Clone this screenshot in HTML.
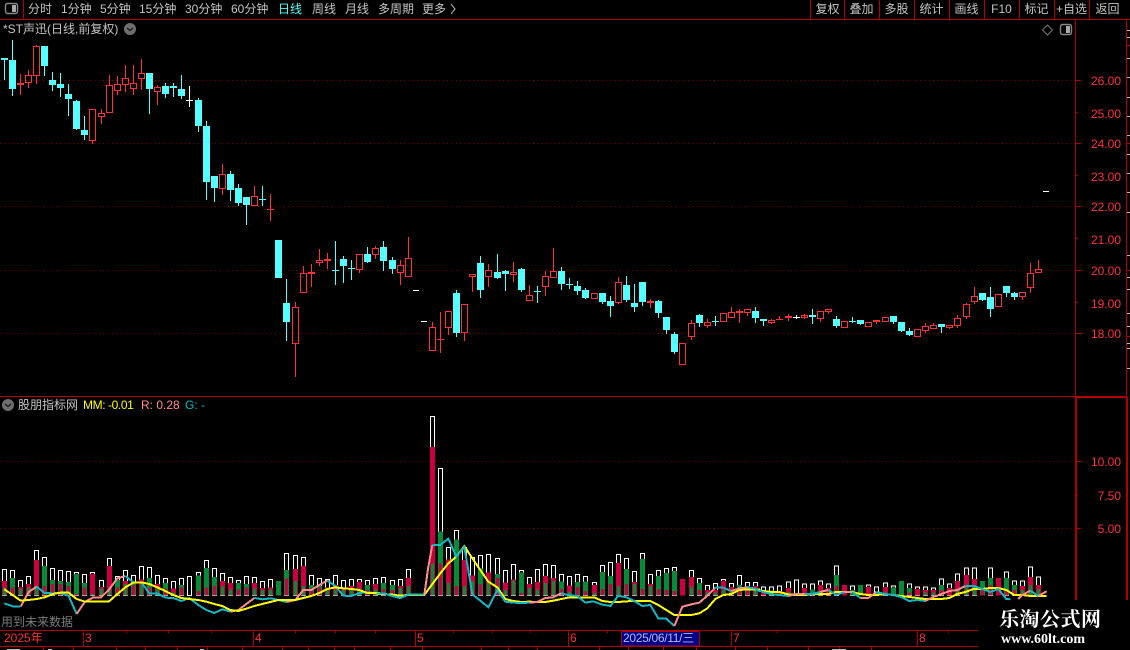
<!DOCTYPE html>
<html><head><meta charset="utf-8"><title>K线</title>
<style>
html,body{margin:0;padding:0;background:#000;width:1130px;height:650px;overflow:hidden}
#r{position:relative;width:1130px;height:650px;background:#000;overflow:hidden;font:12px/14px "Liberation Sans","Noto Sans CJK SC",sans-serif;color:#c4c4c4}
#r svg{position:absolute;left:0;top:0}
.t{position:absolute;white-space:nowrap}
.m{top:2px;height:14px}
.n{top:2px;width:35px;text-align:center}
.p{color:#ff3232;left:1091px}
.q{color:#ff3232;text-align:right;width:30px;left:1091px}
</style></head><body><div id="r">
<svg width="1130" height="650" viewBox="0 0 1130 650">
<g shape-rendering="crispEdges" fill="none">
<!-- grid -->
<path stroke="#8c0000" stroke-dasharray="1 3.3" d="M0 80.5H1075M0 143.5H1075M0 206.5H1075M0 270.5H1075M0 333.5H1075M0 461.5H1075M0 528.5H1075"/>
<!-- frame -->
<path stroke="#b40000" d="M0 19.5H1130M23.5 0V19M810.5 0V19M844.5 0V19M879.5 0V19M914.5 0V19M949.5 0V19M984.5 0V19M1019.5 0V19M1054.5 0V19M1089.5 0V19M1075.5 20V397M1126.5 20V397M0 396.5H1075M1075 80.5H1081M1075 112.5H1078M1075 143.5H1081M1075 175.5H1078M1075 206.5H1081M1075 238.5H1078M1075 270.5H1081M1075 302.5H1078M1075 333.5H1081M1076 461.5H1081M1076 495.5H1078M1076 528.5H1081M1127 45.5H1130M1127 143.5H1130M1127 270.5H1130M1127 336.5H1130"/>
<path stroke="#b40000" stroke-width="2" d="M1075 397H1127M1076 397V600M1127 397V600"/>
<path stroke="#b40000" d="M0 630.5H978M0 646.5H978M83.5 631V646M253.5 631V646M415.5 631V646M568.5 631V646M731.5 631V646M917.5 631V646M126.5 631V633M168.5 631V633M211.5 631V633M295.5 631V633M335.5 631V633M375.5 631V633M453.5 631V633M492.5 631V633M530.5 631V633M607.5 631V633M777.5 631V633M948.5 631V633M43.5 647V650M73.5 647V650M116.5 647V650M145.5 647V650M177.5 647V650M207.5 647V650M242.5 647V650M282.5 647V650M308.5 647V650M334.5 647V650M354.5 647V650M390.5 647V650M422.5 647V650M481.5 647V650M508.5 647V650M537.5 647V650M599.5 647V650M628.5 647V650M663.5 647V650M696.5 647V650M735.5 647V650M767.5 647V650M808.5 647V650M839.5 647V650M871.5 647V650"/>
<path stroke="#bbb" d="M1127 30.5H1130M1127 37.5H1130M1127 58.5H1130M1127 77.5H1130M1127 97.5H1130M1127 116.5H1130M1127 135.5H1130M1127 154.5H1130M1127 173.5H1130M1127 192.5H1130M1127 212.5H1130M1127 255.5H1130M1127 277.5H1130M1127 289.5H1130M1127 313.5H1130M1127 326.5H1130M1127 343.5H1130M1127 348.5H1130M1127 368.5H1130M7 649.5H20M48 649.5H52M200 649.5H204M832 649.5H846"/>
<!-- cyan candles -->
<path stroke="#55ffff" fill="#55ffff" d="M4.5 58V80M1.5 58.5h6v1h-6zM12.5 40V96M9.5 60.5h6V88.5h-6zM44.5 46V76M41.5 46.5h6V65.5h-6zM52.5 72V91M49.5 80.5h6V84.5h-6zM60.5 73V97M57.5 84.5h6V87.5h-6zM68.5 84V116M65.5 94.5h6V98.5h-6zM76.5 100V130M73.5 101.5h6V128.5h-6zM84.5 116V140M81.5 130.5h6V134.5h-6zM149.5 73V114M146.5 73.5h6V88.5h-6zM165.5 83V98M162.5 86.5h6V93.5h-6zM173.5 83V97M170.5 86.5h6V87.5h-6zM181.5 75V99M178.5 89.5h6V95.5h-6zM198.5 98V132M195.5 100.5h6V125.5h-6zM206.5 121V200M203.5 126.5h6V181.5h-6zM214.5 176V202M211.5 176.5h6V187.5h-6zM230.5 171V201M227.5 174.5h6V189.5h-6zM238.5 184V206M235.5 188.5h6V202.5h-6zM246.5 197V225M243.5 197.5h6V204.5h-6zM262.5 186V206M259 199.5h7M275.5 240.5h6V277.5h-6zM286.5 279V341M283.5 303.5h6V321.5h-6zM335.5 241V285M332 270.5h7M343.5 256V283M340.5 259.5h6V265.5h-6zM351.5 260V280M348 268.5h7M367.5 247V263M364.5 254.5h6V261.5h-6zM383.5 241V271M380.5 247.5h6V260.5h-6zM392.5 257V274M389.5 260.5h6V268.5h-6zM456.5 290V337M453.5 293.5h6V332.5h-6zM480.5 256V298M477.5 263.5h6V289.5h-6zM497.5 254V279M494.5 272.5h6V277.5h-6zM505.5 270V291M502.5 271.5h6V273.5h-6zM521.5 268V292M518.5 269.5h6V289.5h-6zM537.5 286V303M534 291.5h7M561.5 267V290M558.5 271.5h6V283.5h-6zM569.5 278V289M566 284.5h7M577.5 281V295M574.5 286.5h6V290.5h-6zM585.5 288V299M582.5 290.5h6V297.5h-6zM602.5 293V304M599.5 293.5h6V301.5h-6zM610.5 296V317M607.5 301.5h6V305.5h-6zM626.5 276V302M623.5 285.5h6V299.5h-6zM634.5 284V312M631.5 303.5h6V306.5h-6zM642.5 282V306M639.5 282.5h6V301.5h-6zM658.5 300V318M655.5 301.5h6V312.5h-6zM666.5 317V334M663.5 317.5h6V329.5h-6zM674.5 332V354M671.5 334.5h6V351.5h-6zM699.5 314V327M696.5 315.5h6V322.5h-6zM715.5 316V326M712 321.5h7M755.5 307V323M752.5 311.5h6V317.5h-6zM763.5 319V326M760.5 319.5h6V320.5h-6zM812.5 309V324M809.5 315.5h6V316.5h-6zM836.5 316V328M833.5 319.5h6V325.5h-6zM852.5 317V323M849 321.5h7M860.5 320V325M857.5 320.5h6V323.5h-6zM893.5 316V324M890.5 316.5h6V321.5h-6zM901.5 322V332M898.5 322.5h6V330.5h-6zM909.5 328V336M906.5 331.5h6V334.5h-6zM941.5 324V333M938.5 324.5h6V326.5h-6zM982.5 293V301M979.5 293.5h6V299.5h-6zM990.5 287V317M987.5 297.5h6V308.5h-6zM1006.5 286V297M1003.5 286.5h6V292.5h-6zM1014.5 292V300M1011.5 293.5h6V296.5h-6z"/>
<!-- red candles -->
<path stroke="#ff3232" d="M20.5 74V95M17.5 83.5h6V84.5h-6zM28.5 70V75M28.5 83V88M25.5 75.5h6V82.5h-6zM36.5 45V46M36.5 75V84M33.5 46.5h6V75.5h-6zM92.5 141V144M89.5 109.5h6V140.5h-6zM101.5 109V113M101.5 117V124M98.5 113.5h6V116.5h-6zM109.5 75V85M106.5 85.5h6V112.5h-6zM117.5 76V84M117.5 91V95M114.5 84.5h6V90.5h-6zM125.5 65V78M125.5 85V92M122.5 78.5h6V84.5h-6zM133.5 65V83M133.5 89V95M130.5 83.5h6V88.5h-6zM141.5 59V73M141.5 79V90M138.5 73.5h6V78.5h-6zM157.5 85V87M157.5 92V105M154.5 87.5h6V91.5h-6zM222.5 164V174M222.5 189V195M219.5 174.5h6V188.5h-6zM254.5 186V196M251.5 196.5h6V205.5h-6zM270.5 194V221M267 209.5h7M295.5 302V307M295.5 344V377M292.5 307.5h6V343.5h-6zM303.5 266V273M300.5 273.5h6V292.5h-6zM311.5 264V287M308.5 272.5h6V273.5h-6zM319.5 249V260M319.5 263V266M316.5 260.5h6V262.5h-6zM327.5 253V269M324.5 259.5h6V260.5h-6zM359.5 270V273M356.5 254.5h6V269.5h-6zM375.5 246V248M375.5 255V259M372.5 248.5h6V254.5h-6zM400.5 260V265M400.5 273V285M397.5 265.5h6V272.5h-6zM408.5 237V258M405.5 258.5h6V276.5h-6zM432.5 322V327M429.5 327.5h6V350.5h-6zM440.5 312V353M437 339.5h7M448.5 328V335M445.5 311.5h6V327.5h-6zM464.5 333V341M461.5 304.5h6V332.5h-6zM472.5 277V292M469.5 274.5h6V276.5h-6zM488.5 264V270M488.5 277V287M485.5 270.5h6V276.5h-6zM513.5 262V272M513.5 275V282M510.5 272.5h6V274.5h-6zM529.5 285V295M526.5 295.5h6V300.5h-6zM545.5 271V276M545.5 287V296M542.5 276.5h6V286.5h-6zM553.5 248V271M550.5 271.5h6V277.5h-6zM591.5 293.5h6V298.5h-6zM618.5 277V282M618.5 303V304M615.5 282.5h6V302.5h-6zM650.5 299V301M650.5 303V308M647.5 301.5h6V302.5h-6zM679.5 343.5h6V364.5h-6zM691.5 320V323M691.5 337V340M688.5 323.5h6V336.5h-6zM707.5 319V322M707.5 326V328M704.5 322.5h6V325.5h-6zM720.5 313.5h6V321.5h-6zM731.5 307V312M728.5 312.5h6V317.5h-6zM739.5 309V323M736.5 311.5h6V312.5h-6zM747.5 313V316M744.5 309.5h6V312.5h-6zM771.5 319V320M771.5 323V324M768.5 320.5h6V322.5h-6zM779.5 316V320M776 319.5h7M788.5 314V321M785.5 316.5h6V317.5h-6zM804.5 314V319M801.5 315.5h6V317.5h-6zM820.5 319V322M817.5 311.5h6V318.5h-6zM828.5 312V314M825.5 309.5h6V311.5h-6zM841.5 321.5h6V327.5h-6zM865.5 322.5h6V326.5h-6zM876.5 322V324M873.5 320.5h6V321.5h-6zM882.5 317.5h6V321.5h-6zM914.5 329.5h6V336.5h-6zM925.5 323V326M925.5 331V333M922.5 326.5h6V330.5h-6zM933.5 323V325M930.5 325.5h6V328.5h-6zM949.5 328V329M946.5 325.5h6V327.5h-6zM957.5 315V318M957.5 326V328M954.5 318.5h6V325.5h-6zM966.5 303V304M966.5 317V319M963.5 304.5h6V316.5h-6zM974.5 287V296M974.5 302V304M971.5 296.5h6V301.5h-6zM995.5 294.5h6V306.5h-6zM1022.5 297V300M1019.5 292.5h6V296.5h-6zM1030.5 263V273M1030.5 288V293M1027.5 273.5h6V287.5h-6zM1038.5 260V269M1035.5 269.5h6V272.5h-6z"/>
<path stroke="#fff" d="M189.5 86V107M186 100.5h7M413 290.5h6M421 321.5h6M796.5 315V319M793 317.5h7M1043 191.5h6"/>
<!-- volume bars, left + right -->
<g transform="translate(0,530) scale(1,.33333)">
<path stroke="#fff" vector-effect="non-scaling-stroke" d="M2.5 118h4V197h-4zM10.5 121h4V197h-4zM18.5 151h4V197h-4zM26.5 139h4V197h-4zM34.5 61h4V197h-4zM42.5 82h4V197h-4zM50.5 115h4V197h-4zM58.5 121h4V197h-4zM66.5 124h4V197h-4zM74.5 127h4V197h-4zM82.5 133h4V197h-4zM90.5 127h4V197h-4zM99.5 151h4V197h-4zM107.5 85h4V197h-4zM115.5 139h4V197h-4zM123.5 121h4V197h-4zM131.5 136h4V197h-4zM139.5 109h4V197h-4zM147.5 112h4V197h-4zM155.5 136h4V197h-4zM163.5 145h4V197h-4zM171.5 154h4V197h-4zM179.5 145h4V197h-4zM187.5 139h4V197h-4zM196.5 127h4V197h-4zM204.5 91h4V197h-4zM212.5 115h4V197h-4zM220.5 130h4V197h-4zM228.5 142h4V197h-4zM236.5 151h4V197h-4zM244.5 139h4V197h-4zM252.5 142h4V197h-4zM260.5 154h4V197h-4zM268.5 148h4V197h-4zM284.5 70h4V197h-4zM293.5 76h4V197h-4zM301.5 82h4V197h-4zM309.5 136h4V197h-4zM317.5 145h4V197h-4zM325.5 148h4V197h-4zM333.5 136h4V197h-4zM341.5 151h4V197h-4zM349.5 148h4V197h-4zM357.5 148h4V197h-4zM365.5 151h4V197h-4zM373.5 145h4V197h-4zM761.5 171h4V197h-4zM769.5 171h4V197h-4zM777.5 168h4V197h-4zM786.5 156h4V197h-4zM794.5 150h4V197h-4zM802.5 162h4V197h-4zM810.5 162h4V197h-4zM818.5 153h4V197h-4zM826.5 162h4V197h-4zM834.5 108h4V197h-4zM850.5 168h4V197h-4zM866.5 165h4V197h-4zM874.5 171h4V197h-4zM883.5 159h4V197h-4zM891.5 168h4V197h-4zM907.5 162h4V197h-4zM915.5 171h4V197h-4zM923.5 171h4V197h-4zM931.5 174h4V197h-4zM939.5 147h4V197h-4zM947.5 162h4V197h-4zM955.5 132h4V197h-4zM964.5 114h4V197h-4zM972.5 114h4V197h-4zM988.5 114h4V197h-4zM1004.5 126h4V197h-4zM1012.5 153h4V197h-4zM1020.5 153h4V197h-4zM1028.5 111h4V197h-4zM1036.5 141h4V197h-4z"/>
<path fill="#cc0040" d="M2 153h5V197h-5zM18 171h5V197h-5zM26 162h5V197h-5zM34 90h5V197h-5zM90 132h5V197h-5zM99 171h5V197h-5zM107 108h5V197h-5zM123 153h5V197h-5zM139 148h5V197h-5zM155 162h5V197h-5zM171 175h5V197h-5zM220 153h5V197h-5zM228 159h5V197h-5zM252 159h5V197h-5zM260 174h5V197h-5zM268 172h5V197h-5zM293 117h5V197h-5zM301 108h5V197h-5zM325 172h5V197h-5zM333 165h5V197h-5zM341 172h5V197h-5zM349 168h5V197h-5zM357 156h5V197h-5zM373 162h5V197h-5zM761 183h5V197h-5zM777 183h5V197h-5zM786 174h5V197h-5zM802 174h5V197h-5zM818 165h5V197h-5zM826 174h5V197h-5zM842 165h5V197h-5zM866 171h5V197h-5zM883 171h5V197h-5zM915 177h5V197h-5zM923 180h5V197h-5zM931 180h5V197h-5zM947 174h5V197h-5zM955 153h5V197h-5zM964 135h5V197h-5zM972 147h5V197h-5zM996 144h5V197h-5zM1020 168h5V197h-5zM1028 141h5V197h-5zM1036 165h5V197h-5z"/>
<path fill="#088a38" d="M10 144h5V197h-5zM42 108h5V197h-5zM50 150h5V197h-5zM58 153h5V197h-5zM66 156h5V197h-5zM74 132h5V197h-5zM82 159h5V197h-5zM115 150h5V197h-5zM131 156h5V197h-5zM147 144h5V197h-5zM163 159h5V197h-5zM179 165h5V197h-5zM196 137h5V197h-5zM204 114h5V197h-5zM212 141h5V197h-5zM236 159h5V197h-5zM244 162h5V197h-5zM276 153h5V197h-5zM284 120h5V197h-5zM309 165h5V197h-5zM317 168h5V197h-5zM365 165h5V197h-5zM769 181h5V197h-5zM810 178h5V197h-5zM834 135h5V197h-5zM850 180h5V197h-5zM858 165h5V197h-5zM874 187h5V197h-5zM891 172h5V197h-5zM899 153h5V197h-5zM907 174h5V197h-5zM939 165h5V197h-5zM980 153h5V197h-5zM988 144h5V197h-5zM1004 144h5V197h-5zM1012 165h5V197h-5z"/>
<path fill="#cc0040" d="M11 172h3V197h-3zM43 168h3V197h-3zM51 162h3V197h-3zM59 162h3V197h-3zM67 168h3V197h-3zM75 192h3V197h-3zM83 172h3V197h-3zM116 172h3V197h-3zM132 165h3V197h-3zM148 172h3V197h-3zM164 175h3V197h-3zM180 172h3V197h-3zM197 183h3V197h-3zM205 172h3V197h-3zM213 168h3V197h-3zM237 178h3V197h-3zM245 172h3V197h-3zM285 145h3V197h-3zM310 175h3V197h-3zM318 172h3V197h-3zM366 180h3V197h-3zM811 190h3V197h-3zM835 168h3V197h-3zM908 187h3V197h-3zM940 180h3V197h-3zM981 180h3V197h-3zM989 165h3V197h-3zM1005 180h3V197h-3zM1013 180h3V197h-3z"/>
<path fill="#088a38" d="M3 172h3V197h-3zM19 175h3V197h-3zM27 172h3V197h-3zM35 168h3V197h-3zM91 192h3V197h-3zM100 175h3V197h-3zM108 172h3V197h-3zM124 162h3V197h-3zM140 165h3V197h-3zM156 175h3V197h-3zM172 187h3V197h-3zM221 170h3V197h-3zM229 178h3V197h-3zM253 175h3V197h-3zM261 180h3V197h-3zM269 178h3V197h-3zM294 153h3V197h-3zM302 168h3V197h-3zM326 180h3V197h-3zM334 180h3V197h-3zM342 180h3V197h-3zM350 178h3V197h-3zM358 175h3V197h-3zM374 178h3V197h-3zM787 187h3V197h-3zM803 190h3V197h-3zM819 187h3V197h-3zM884 187h3V197h-3zM924 187h3V197h-3zM932 187h3V197h-3zM956 180h3V197h-3zM965 168h3V197h-3zM973 165h3V197h-3zM1021 180h3V197h-3zM1029 165h3V197h-3zM1037 177h3V197h-3z"/>
</g>
<!-- volume bars, middle -->
<g transform="translate(0,400) scale(1,.33333)">
<path stroke="#fff" vector-effect="non-scaling-stroke" d="M381.5 532h4V587h-4zM390.5 541h4V587h-4zM398.5 538h4V587h-4zM406.5 508h4V587h-4zM430.5 49h4V587h-4zM438.5 205h4V587h-4zM446.5 442h4V587h-4zM454.5 391h4V587h-4zM462.5 442h4V587h-4zM470.5 472h4V587h-4zM478.5 466h4V587h-4zM486.5 463h4V587h-4zM495.5 475h4V587h-4zM503.5 511h4V587h-4zM511.5 493h4V587h-4zM519.5 511h4V587h-4zM527.5 532h4V587h-4zM535.5 508h4V587h-4zM543.5 493h4V587h-4zM551.5 496h4V587h-4zM559.5 523h4V587h-4zM567.5 529h4V587h-4zM575.5 523h4V587h-4zM583.5 529h4V587h-4zM592.5 547h4V587h-4zM600.5 496h4V587h-4zM608.5 487h4V587h-4zM616.5 463h4V587h-4zM624.5 475h4V587h-4zM632.5 514h4V587h-4zM640.5 460h4V587h-4zM648.5 523h4V587h-4zM656.5 511h4V587h-4zM664.5 505h4V587h-4zM672.5 502h4V587h-4zM689.5 511h4V587h-4zM697.5 535h4V587h-4zM705.5 556h4V587h-4zM713.5 550h4V587h-4zM721.5 538h4V587h-4zM729.5 550h4V587h-4zM737.5 526h4V587h-4zM745.5 547h4V587h-4zM753.5 547h4V587h-4z"/>
<path fill="#cc0040" d="M398 558h5V587h-5zM406 534h5V587h-5zM430 141h5V587h-5zM446 478h5V587h-5zM462 480h5V587h-5zM470 526h5V587h-5zM486 517h5V587h-5zM503 547h5V587h-5zM511 538h5V587h-5zM527 552h5V587h-5zM535 546h5V587h-5zM543 528h5V587h-5zM551 534h5V587h-5zM567 556h5V587h-5zM592 555h5V587h-5zM616 489h5V587h-5zM632 546h5V587h-5zM648 552h5V587h-5zM680 537h5V587h-5zM689 531h5V587h-5zM705 570h5V587h-5zM713 570h5V587h-5zM721 543h5V587h-5zM729 561h5V587h-5zM753 558h5V587h-5z"/>
<path fill="#088a38" d="M381 549h5V587h-5zM390 555h5V587h-5zM438 394h5V587h-5zM454 418h5V587h-5zM478 505h5V587h-5zM495 522h5V587h-5zM519 517h5V587h-5zM559 544h5V587h-5zM575 546h5V587h-5zM583 544h5V587h-5zM600 516h5V587h-5zM608 528h5V587h-5zM624 507h5V587h-5zM640 477h5V587h-5zM656 528h5V587h-5zM664 519h5V587h-5zM672 513h5V587h-5zM697 549h5V587h-5zM737 555h5V587h-5zM745 558h5V587h-5z"/>
<path fill="#cc0040" d="M382 567h3V587h-3zM391 570h3V587h-3zM439 490h3V587h-3zM455 558h3V587h-3zM479 552h3V587h-3zM496 534h3V587h-3zM520 579h3V587h-3zM560 567h3V587h-3zM576 561h3V587h-3zM584 573h3V587h-3zM601 567h3V587h-3zM609 552h3V587h-3zM625 552h3V587h-3zM641 567h3V587h-3zM657 567h3V587h-3zM665 570h3V587h-3zM673 573h3V587h-3zM698 570h3V587h-3zM738 570h3V587h-3zM746 570h3V587h-3z"/>
<path fill="#088a38" d="M399 564h3V587h-3zM407 558h3V587h-3zM431 490h3V587h-3zM447 549h3V587h-3zM463 558h3V587h-3zM471 545h3V587h-3zM487 545h3V587h-3zM504 570h3V587h-3zM512 541h3V587h-3zM528 564h3V587h-3zM536 568h3V587h-3zM544 549h3V587h-3zM552 543h3V587h-3zM568 575h3V587h-3zM593 579h3V587h-3zM617 558h3V587h-3zM633 552h3V587h-3zM649 558h3V587h-3zM690 561h3V587h-3zM706 578h3V587h-3zM714 578h3V587h-3zM722 570h3V587h-3zM730 575h3V587h-3zM754 570h3V587h-3z"/>
</g>
<!-- clean baseline under bars -->
<path stroke="#000" d="M0 596.5H1075"/>
<path stroke="#fff" d="M187 595.5h5M794 595.5h5"/>
<!-- lines left (zoom coords) -->
<g transform="translate(0,530) scale(.33333)" stroke-width="6">
<polyline stroke="#10b8c4" points="13,220 38,229 62,230"/>
<polyline stroke="#ff8c8c" points="62,230 86,186 110,170"/>
<polyline stroke="#10b8c4" points="110,170 134,189 158,190 182,189 206,198 230,252"/>
<polyline stroke="#ff8c8c" points="230,252 254,216 278,203 302,203 326,180 352,145 376,138"/>
<polyline stroke="#10b8c4" points="376,138 400,157 424,157 448,190 472,190 496,203 520,204 544,213 568,204 595,225 619,240 643,249 667,238 691,245"/>
<polyline stroke="#ff8c8c" points="691,245 715,240 739,222 763,204"/>
<polyline stroke="#10b8c4" points="763,204 787,208 811,205 835,210 859,216"/>
<polyline stroke="#ff8c8c" points="859,216 886,210 910,180 934,180 958,165 982,152"/>
<polyline stroke="#10b8c4" points="982,152 1006,168 1030,197 1054,198 1078,189 1102,187 1126,189 1140,189"/>
<polyline stroke="#ffff00" points="13,178 38,195 62,212 86,210 110,207 134,202 158,192 182,188 206,188 230,207 254,215 278,215 302,215 326,215 352,192 376,172 400,158 424,157 448,162 472,172 496,183 520,195 544,204 568,207 595,210 619,215 643,222 667,228 691,240 715,243 739,236 763,228 787,222 811,216 835,210 859,210 886,210 910,204 934,198 958,189 982,177 1006,172 1030,175 1054,177 1078,180 1102,189 1140,189"/>
</g>
<!-- lines middle -->
<g transform="translate(380,400) scale(.33333)" stroke-width="6">
<polyline stroke="#ffff00" points="-10,582 10,582 37,584 61,587 85,585 108,585 133,585 157,552 181,520 205,490 229,470 253,438 277,475 301,510 325,545 352,562 376,597 400,603 424,606 448,605 472,606 496,606 520,602 544,597 568,592 592,592 616,592 643,592 667,603 691,606 715,606 739,604 763,603 787,603 811,603 835,615 859,630 883,645 907,645 934,645 958,640 982,625 1006,597 1030,585 1054,582 1078,570 1102,568 1140,568"/>
<polyline stroke="#10b8c4" points="-10,580 10,580 37,588 61,594 85,584 108,584 133,584"/>
<polyline stroke="#ff8c8c" points="133,584 145,500 157,435"/>
<polyline stroke="#10b8c4" points="157,435 181,435 205,416 229,470 253,441 277,583 301,602 325,622 352,570 376,605 400,608 424,609 448,608"/>
<polyline stroke="#ff8c8c" points="448,608 472,606 496,594 520,592 544,580"/>
<polyline stroke="#10b8c4" points="544,580 568,586 592,588 616,608 640,604 667,614 691,618 715,587 739,592 763,603 787,618 811,615 835,655 859,656 883,678"/>
<polyline stroke="#ff8c8c" points="883,678 907,620 934,613 958,608 982,587 1006,563"/>
<polyline stroke="#10b8c4" points="1006,563 1030,563 1054,573"/>
<polyline stroke="#ff8c8c" points="1054,573 1078,565 1102,562"/>
<polyline stroke="#10b8c4" points="1102,562 1126,566 1140,575"/>
</g>
<!-- lines right -->
<g transform="translate(760,530) scale(.33333)" stroke-width="6">
<polyline stroke="#ffff00" points="0,181 9,183 34,186 58,186 85,193 110,195 133,195 157,192 181,192 205,192 229,186 253,186 277,186 301,192 325,195 349,195 376,192 400,195 424,198 448,201 472,204 496,207 520,207 544,207 568,204 592,192 616,186 640,177 667,177 691,174 715,174 739,180 763,195 787,195 811,198 835,198 860,198"/>
<polyline stroke="#10b8c4" points="0,182 9,186 34,192 58,195 85,198"/>
<polyline stroke="#ff8c8c" points="85,198 110,192 133,192 157,192"/>
<polyline stroke="#10b8c4" points="133,192 157,192 181,186"/>
<polyline stroke="#ff8c8c" points="181,186 205,180"/>
<polyline stroke="#10b8c4" points="205,180 229,195 253,186"/>
<polyline stroke="#ff8c8c" points="253,186 277,186"/>
<polyline stroke="#10b8c4" points="277,186 301,204"/>
<polyline stroke="#ff8c8c" points="301,204 325,204 349,186"/>
<polyline stroke="#10b8c4" points="349,186 376,192 400,195 424,201 448,213 472,210 496,213"/>
<polyline stroke="#ff8c8c" points="496,213 520,201 544,192 568,183 592,180 616,168"/>
<polyline stroke="#10b8c4" points="616,168 640,168 667,177 691,186 715,177 739,207 751,208"/>
<polyline stroke="#ff8c8c" points="775,207 787,195 811,182"/>
<polyline stroke="#10b8c4" points="811,182 835,198"/>
<polyline stroke="#ff8c8c" points="835,198 860,184"/>
</g>
</g>
<!-- date highlight -->
<rect x="621.5" y="631.5" width="78" height="14.5" fill="#000088" stroke="#b40000" shape-rendering="crispEdges"/>
<!-- icons -->
<rect x="5.5" y="3.5" width="12" height="10" rx="2" fill="none" stroke="#888" stroke-width="1.4"/><rect x="12" y="5" width="4" height="7" fill="#aaa"/>
<rect x="1060.5" y="24.5" width="11" height="10" rx="2" fill="none" stroke="#888" stroke-width="1.4"/><rect x="1066" y="26" width="4" height="7" fill="#aaa"/>
<path d="M1047.5 25 L1052.5 30 L1047.5 35 L1042.5 30Z" fill="none" stroke="#777"/>
<circle cx="130" cy="29" r="6" fill="#6e6e6e"/><path d="M127 28l3 2.5 3-2.5" fill="none" stroke="#1a1a1a" stroke-width="1.3"/>
<circle cx="8" cy="405" r="6" fill="#6e6e6e"/><path d="M5 404l3 2.5 3-2.5" fill="none" stroke="#1a1a1a" stroke-width="1.3"/>
<path d="M451 4l4 5-4 5" fill="none" stroke="#c4c4c4"/>
</svg>

<div class="t m" style="left:28px">分时</div>
<div class="t m" style="left:61px">1分钟</div>
<div class="t m" style="left:100px">5分钟</div>
<div class="t m" style="left:139px">15分钟</div>
<div class="t m" style="left:185px">30分钟</div>
<div class="t m" style="left:231px">60分钟</div>
<div class="t m" style="left:278px;color:#55ffff">日线</div>
<div class="t m" style="left:312px">周线</div>
<div class="t m" style="left:345px">月线</div>
<div class="t m" style="left:378px">多周期</div>
<div class="t m" style="left:422px">更多</div>
<div class="t n" style="left:810px">复权</div>
<div class="t n" style="left:844px">叠加</div>
<div class="t n" style="left:879px">多股</div>
<div class="t n" style="left:914px">统计</div>
<div class="t n" style="left:949px">画线</div>
<div class="t n" style="left:984px">F10</div>
<div class="t n" style="left:1019px">标记</div>
<div class="t n" style="left:1054px">+自选</div>
<div class="t n" style="left:1090px">返回</div>

<div class="t" style="left:3px;top:22px">*ST声迅(日线,前复权)</div>
<div class="t" style="left:18px;top:398px">股朋指标网</div>
<div class="t" style="left:83px;top:398px;color:#ffff00;letter-spacing:-.4px">MM: -0.01</div>
<div class="t" style="left:141px;top:398px;color:#ff8c8c">R: 0.28</div>
<div class="t" style="left:185px;top:398px;color:#10b8c4">G: -</div>
<div class="t" style="left:1px;top:615px;color:#7c7c7c">用到未来数据</div>

<div class="t p" style="top:74px">26.00</div>
<div class="t p" style="top:107px">25.00</div>
<div class="t p" style="top:137px">24.00</div>
<div class="t p" style="top:170px">23.00</div>
<div class="t p" style="top:200px">22.00</div>
<div class="t p" style="top:233px">21.00</div>
<div class="t p" style="top:264px">20.00</div>
<div class="t p" style="top:297px">19.00</div>
<div class="t p" style="top:327px">18.00</div>
<div class="t q" style="top:455px">10.00</div>
<div class="t q" style="top:489px">7.50</div>
<div class="t q" style="top:522px">5.00</div>

<div class="t" style="left:4px;top:631px;color:#ff3232">2025年</div>
<div class="t" style="left:85px;top:631px;color:#ff3232">3</div>
<div class="t" style="left:255px;top:631px;color:#ff3232">4</div>
<div class="t" style="left:417px;top:631px;color:#ff3232">5</div>
<div class="t" style="left:570px;top:631px;color:#ff3232">6</div>
<div class="t" style="left:623px;top:631px;color:#b8b8f0;letter-spacing:-.3px">2025/06/11/三</div>
<div class="t" style="left:733px;top:631px;color:#ff3232">7</div>
<div class="t" style="left:919px;top:631px;color:#ff3232">8</div>

<div class="t" style="left:999px;top:606px;font:bold 20px/24px 'Noto Serif CJK SC','Liberation Serif',serif;color:#fff;letter-spacing:.5px">乐淘公式网</div>
<div class="t" style="left:1001px;top:632px;font:bold 14px/16px 'Liberation Serif',serif;color:#fff">www.60lt.com</div>
</div></body></html>
